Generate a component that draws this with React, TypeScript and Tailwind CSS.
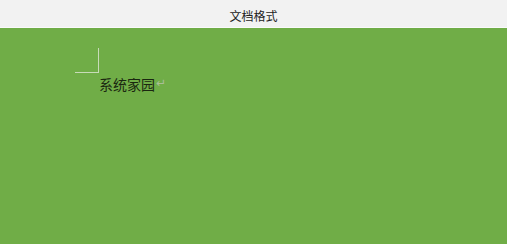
export default function App() {
  return (
    <div className="w-[507px] h-[244px] flex flex-col bg-[#70ad47] font-['Noto_Sans_CJK_SC',sans-serif]">
      <div className="h-[28px] shrink-0 bg-[#f2f2f2] border-b border-[#fafafa] flex items-center justify-center pt-[5px]">
        <span className="text-[12px] leading-none text-[#222]">文档格式</span>
      </div>
      <div className="pt-[20px] pl-[75px]">
        <div className="w-[24px] h-[25px] border-r border-b border-[#c8dbb8]" />
        <div className="pl-[24px] pt-[2px] flex items-center">
          <span className="text-[14px] leading-[18px] text-[#1a2610]">系统家园</span>
          <span className="text-[12px] leading-none text-[#a9bd98] ml-[1px] -mt-[3px] font-['DejaVu_Sans',sans-serif]">↵</span>
        </div>
      </div>
    </div>
  );
}
